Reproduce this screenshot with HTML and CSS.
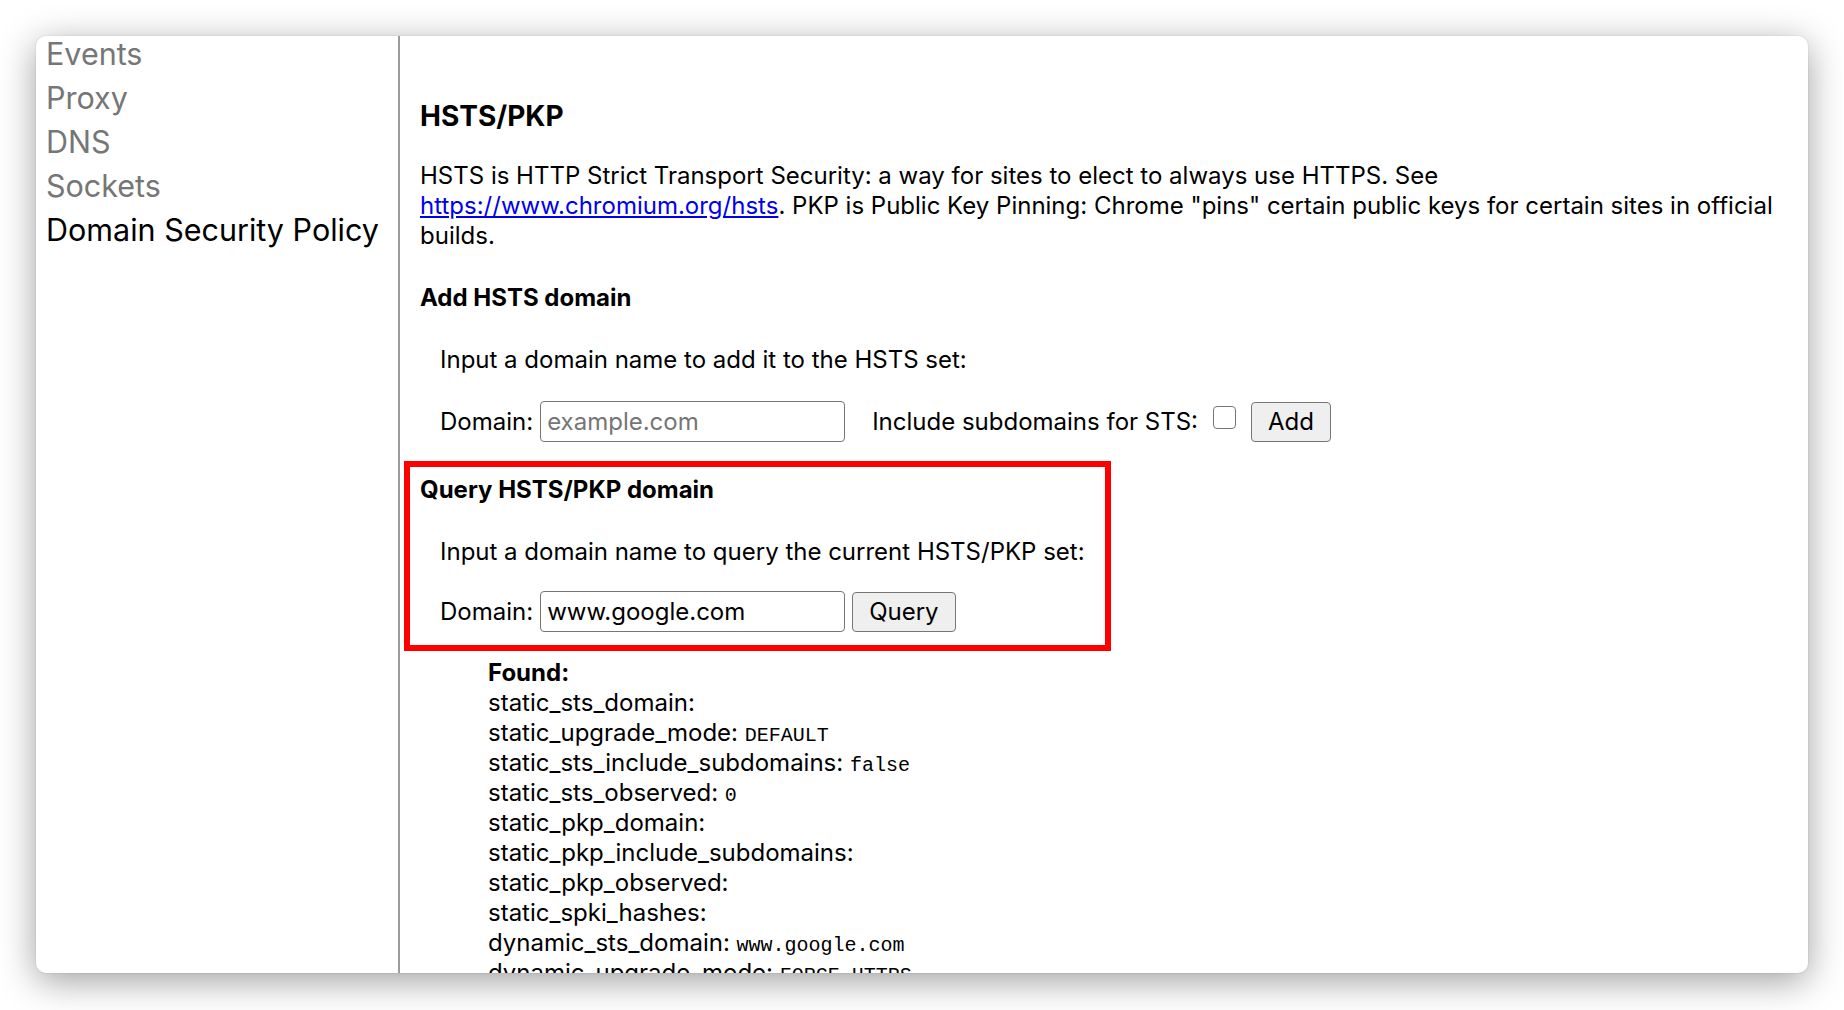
FILE: index.html
```html
<!DOCTYPE html>
<html>
<head>
<meta charset="utf-8">
<title>net-internals: Domain Security Policy</title>
<link rel="stylesheet" href="styles.css">
</head>
<body>
<div class="window">
  <nav class="sidebar">
    <div class="nav-item">Events</div>
    <div class="nav-item">Proxy</div>
    <div class="nav-item">DNS</div>
    <div class="nav-item">Sockets</div>
    <div class="nav-item selected">Domain Security Policy</div>
  </nav>
  <main class="content">
    <h3 class="title">HSTS/PKP</h3>
    <p class="intro">HSTS is HTTP Strict Transport Security: a way for sites to elect to always use HTTPS. See <a href="#">https://www.chromium.org/hsts</a>. PKP is Public Key Pinning: Chrome "pins" certain public keys for certain sites in official builds.</p>

    <h4 class="subtitle">Add HSTS domain</h4>
    <p class="instr">Input a domain name to add it to the HSTS set:</p>
    <div class="row">
      <span class="label">Domain:</span>
      <input class="field" type="text" placeholder="example.com">
      <span class="label sts">Include subdomains for STS:</span>
      <input class="check" type="checkbox">
      <button class="btn">Add</button>
    </div>

    <section class="highlight">
      <h4 class="subtitle">Query HSTS/PKP domain</h4>
      <p class="instr q">Input a domain name to query the current HSTS/PKP set:</p>
      <div class="row">
        <span class="label">Domain:</span>
        <input class="field" type="text" value="www.google.com">
        <button class="btn query">Query</button>
      </div>
    </section>

    <div class="result">
      <div class="line found">Found:</div>
      <div class="line">static_sts_domain:</div>
      <div class="line">static_upgrade_mode: <tt>DEFAULT</tt></div>
      <div class="line">static_sts_include_subdomains: <tt>false</tt></div>
      <div class="line">static_sts_observed: <tt>0</tt></div>
      <div class="line">static_pkp_domain:</div>
      <div class="line">static_pkp_include_subdomains:</div>
      <div class="line">static_pkp_observed:</div>
      <div class="line">static_spki_hashes:</div>
      <div class="line">dynamic_sts_domain: <tt>www.google.com</tt></div>
      <div class="line">dynamic_upgrade_mode: <tt>FORCE_HTTPS</tt></div>
    </div>
  </main>
</div>
</body>
</html>
```

FILE: styles.css
```css
html, body {
  margin: 0;
  padding: 0;
  background: #ffffff;
}

body {
  width: 1844px;
  height: 1010px;
  overflow: hidden;
  font-family: "Inter", "Liberation Sans", sans-serif;
  color: #000;
}

.window {
  margin: 36px 0 0 36px;
  width: 1772px;
  height: 937px;
  background: #fff;
  border-radius: 10px;
  box-shadow: 0 8px 36px rgba(0, 0, 0, 0.38), 0 0 0 1px rgba(0, 0, 0, 0.04);
  overflow: hidden;
  display: flex;
}

.sidebar {
  width: 352px;
  flex: none;
  padding-left: 10px;
  border-right: 2px solid #9b9b9b;
  font-size: 30.5px;
  line-height: 44px;
  color: #767676;
  margin-top: -4px;
  margin-bottom: 0;
  padding-bottom: 4px;
}

.nav-item {
  white-space: nowrap;
}

.nav-item.selected {
  color: #000;
}

.content {
  flex: 1;
  padding: 65px 30px 0 20px;
  font-size: 24px;
  line-height: 30px;
}

.title {
  margin: 0 0 30px;
  font-size: 28px;
  line-height: 30px;
  font-weight: 700;
}

.intro {
  margin: 0 0 32px;
}

.intro a {
  color: #0000ee;
  text-decoration: underline;
}

.subtitle {
  margin: 0 0 32px;
  font-size: 24px;
  line-height: 30px;
  font-weight: 700;
}

.instr {
  margin: 0 0 26px;
  padding-left: 20px;
}

.row {
  display: flex;
  align-items: center;
  height: 41px;
  padding-left: 20px;
}

.label {
  margin-right: 7px;
}

.label.sts {
  margin-left: 27px;
  margin-right: 15px;
}

.field {
  box-sizing: border-box;
  width: 305px;
  height: 41px;
  margin: 0;
  padding: 0 6px;
  border: 1.5px solid #767676;
  border-radius: 4px;
  font-family: inherit;
  font-size: 24px;
  color: #000;
  background: #fff;
}

.field::placeholder {
  color: #757575;
}

.check {
  appearance: none;
  -webkit-appearance: none;
  box-sizing: border-box;
  width: 23px;
  height: 23px;
  margin: -8px 15px 0 0;
  border: 1.5px solid #767676;
  border-radius: 4px;
  background: #fff;
}

.btn {
  box-sizing: border-box;
  height: 40px;
  margin: 0;
  padding: 0 16px;
  border: 1.5px solid #767676;
  border-radius: 4px;
  background: #efefef;
  font-family: inherit;
  font-size: 24px;
  color: #000;
}

.btn.query {
  margin-left: 7px;
  padding: 0 16px;
}

.highlight {
  margin: 19px 0 0 -16px;
  width: 707px;
  box-sizing: border-box;
  border: 6px solid #ff0000;
  padding: 8px 10px 13px;
}

.instr.q {
  margin-bottom: 24px;
}

.result {
  margin-top: 7px;
  padding-left: 68px;
}

.line {
  height: 30px;
  white-space: nowrap;
}

.found {
  font-weight: 700;
}

tt {
  font-family: "Liberation Mono", monospace;
  font-size: 20px;
  line-height: 1;
}
```
